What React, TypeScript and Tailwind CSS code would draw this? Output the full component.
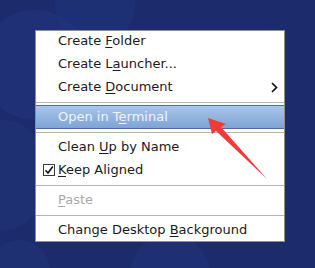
const Mn = ({ children }: { children: string }) => (
  <span className="underline underline-offset-[2px] decoration-1">{children}</span>
);

const Separator = ({ className }: { className: string }) => (
  <div className={className}>
    <div className="h-px w-full bg-[#b4b4b4]" />
  </div>
);

const Item = ({
  children,
  disabled,
  checked,
  submenu,
  className = "h-[23px]",
}: {
  children: React.ReactNode;
  disabled?: boolean;
  checked?: boolean;
  submenu?: boolean;
  className?: string;
}) => (
  <div
    className={`flex items-start leading-[20px] ${className} ${
      disabled ? "text-[#a9a9a9]" : "text-[#1a1a1a]"
    }`}
  >
    <div className="w-[22px] shrink-0 flex justify-end pr-[3px] pt-[4px]">
      {checked && (
        <span className="w-[12px] h-[12px] border border-[#3a3a3a] bg-white flex items-center justify-center">
          <svg width="10" height="10" viewBox="0 0 10 10">
            <path d="M1.5 5.2 L4 8 L8.8 1.5" fill="none" stroke="#111" strokeWidth="1.6" />
          </svg>
        </span>
      )}
    </div>
    <div className="flex-1">{children}</div>
    {submenu && (
      <svg className="mt-[5px] mr-[6px]" width="7" height="11" viewBox="0 0 7 11">
        <path d="M1 1 L5.5 5.5 L1 10" fill="none" stroke="#111" strokeWidth="1.7" />
      </svg>
    )}
  </div>
);

export default function App() {
  return (
    <div
      className="relative w-[315px] h-[268px] overflow-hidden bg-[#1b2b6c] pl-[35px] pt-[30px] text-[13px]"
      style={{ fontFamily: '"DejaVu Sans", "Liberation Sans", sans-serif' }}
    >
      {/* bokeh background */}
      <div className="absolute -left-[20px] top-[10px] w-[110px] h-[110px] rounded-full bg-[#21337a] opacity-70" />
      <div className="absolute left-[55px] -top-[35px] w-[80px] h-[80px] rounded-full bg-[#21337a] opacity-60" />
      <div className="absolute -left-[30px] top-[120px] w-[70px] h-[110px] rounded-full bg-[#213378] opacity-50" />
      <div className="absolute left-[130px] top-[235px] w-[80px] h-[80px] rounded-full bg-[#213378] opacity-60" />
      <div className="absolute -left-[10px] top-[240px] w-[60px] h-[60px] rounded-full bg-[#213378] opacity-50" />

      <div className="relative w-[250px] flex flex-col bg-white border border-[#8f8f8f]">
        <Item>
          Create <Mn>F</Mn>older
        </Item>
        <Item>
          Create L<Mn>a</Mn>uncher...
        </Item>
        <Item submenu>
          Create <Mn>D</Mn>ocument
        </Item>
        <Separator className="h-[5px] pt-[2px]" />
        <div className="h-[24px] leading-[22px] pl-[22px] text-[#eef3fb] border-y border-[#4d6f9f] bg-gradient-to-b from-[#a9c6e8] to-[#7ea4d4]">
          Open in T<Mn>e</Mn>rminal
        </div>
        <Separator className="h-[8px] pt-[3px]" />
        <Item>
          Clean <Mn>U</Mn>p by Name
        </Item>
        <Item checked>
          <Mn>K</Mn>eep Aligned
        </Item>
        <Separator className="h-[7px] pt-[2px]" />
        <Item disabled>
          <Mn>P</Mn>aste
        </Item>
        <Separator className="h-[7px] pt-[2px]" />
        <Item className="h-[21px]">
          Change Desktop <Mn>B</Mn>ackground
        </Item>
      </div>

      {/* red annotation arrow */}
      <svg className="absolute left-0 top-0" width="315" height="268" viewBox="0 0 315 268">
        <polygon
          points="208,118 226,124 221,127 267,179 216,131 212,134"
          fill="#f33a3a"
        />
      </svg>
    </div>
  );
}
